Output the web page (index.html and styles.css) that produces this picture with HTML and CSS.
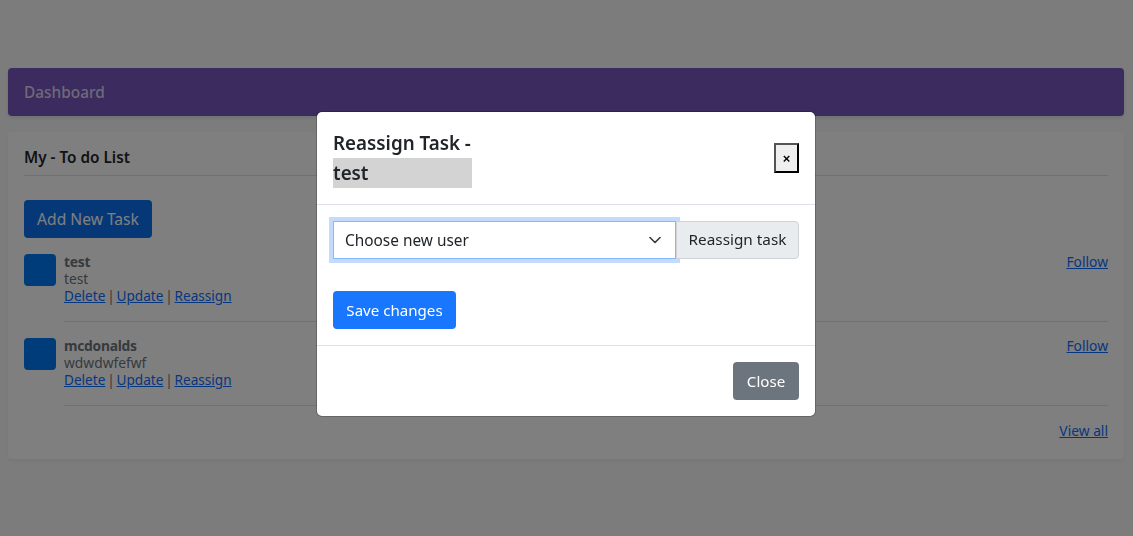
FILE: index.html
```html
<!DOCTYPE html>
<html lang="en">
<head>
  <meta charset="UTF-8" />
  <meta name="viewport" content="width=device-width, initial-scale=1.0" />
  <title>Dashboard</title>
  <link rel="stylesheet" href="styles.css">
</head>
<body>
  <nav class="navbar">Dashboard</nav>

  <main class="card">
    <h6 class="card-title">My - To do List</h6>
    <button class="btn btn-primary btn-add">Add New Task</button>

    <div class="task">
      <div class="avatar"></div>
      <div class="task-body">
        <div class="task-text">
          <strong>test</strong>
          <span>test</span>
          <span class="task-links"><a href="#">Delete</a> | <a href="#">Update</a> | <a href="#">Reassign</a></span>
        </div>
        <a href="#">Follow</a>
      </div>
    </div>

    <div class="task">
      <div class="avatar"></div>
      <div class="task-body">
        <div class="task-text">
          <strong>mcdonalds</strong>
          <span>wdwdwfefwf</span>
          <span class="task-links"><a href="#">Delete</a> | <a href="#">Update</a> | <a href="#">Reassign</a></span>
        </div>
        <a href="#">Follow</a>
      </div>
    </div>

    <div class="view-all"><a href="#">View all</a></div>
  </main>

  <div class="backdrop"></div>

  <div class="modal">
    <div class="modal-header">
      <h5 class="modal-title">Reassign Task - <span class="task-name">test</span></h5>
      <button class="close-x">×</button>
    </div>
    <div class="modal-body">
      <div class="input-group">
        <div class="select">
          <span>Choose new user</span>
          <svg width="12" height="8" viewBox="0 0 12 8"><path d="M1 1.5l5 5 5-5" fill="none" stroke="#343a40" stroke-width="1.6" stroke-linecap="round" stroke-linejoin="round"/></svg>
        </div>
        <button class="btn-addon">Reassign task</button>
      </div>
      <button class="btn btn-primary btn-save">Save changes</button>
    </div>
    <div class="modal-footer">
      <button class="btn btn-secondary">Close</button>
    </div>
  </div>
</body>
</html>
```

FILE: styles.css
```css
* {
  box-sizing: border-box;
}
body {
  margin: 0;
  padding: 68px 9px 0 8px;
  height: 536px;
  overflow: hidden;
  font-family: "Noto Sans", sans-serif;
  font-size: 13.8px;
  line-height: 17px;
  background: #f8f9fa;
  color: #6c757d;
}
a {
  color: #0d6efd;
}
.navbar {
  height: 48px;
  padding: 0 16px;
  display: flex;
  align-items: center;
  background: #7656be;
  color: rgba(255, 255, 255, 0.75);
  font-size: 15.4px;
  font-weight: 500;
  border-radius: 4px;
  box-shadow: 0 2px 4px rgba(0, 0, 0, 0.1);
}
.card {
  height: 327px;
  margin-top: 16px;
  padding: 16px;
  background: #fff;
  border-radius: 4px;
  box-shadow: 0 2px 4px rgba(0, 0, 0, 0.05);
}
.card-title {
  margin: 0 0 24px;
  height: 28px;
  font-size: 15.3px;
  line-height: 19px;
  font-weight: 600;
  color: #212529;
  border-bottom: 1px solid #dee2e6;
}
.btn {
  height: 38px;
  padding: 0 13px;
  border: 0;
  border-radius: 4px;
  font-family: inherit;
  font-size: 15.1px;
  color: #fff;
}
.btn-primary {
  background: #1976ff;
}
.btn-secondary {
  background: #6c757d;
}
.btn-add {
  width: 128px;
  display: block;
  margin-bottom: 16px;
  padding: 0 0 1px;
  font-size: 15.6px;
  background: #0c70f0;
}
.task {
  display: flex;
  gap: 8px;
  margin-bottom: 16px;
}
.avatar {
  width: 32px;
  height: 32px;
  flex: none;
  background: #0076f5;
  border-radius: 4px;
}
.task-body {
  flex: 1;
  height: 69px;
  margin-top: -1px;
  display: flex;
  justify-content: space-between;
  border-bottom: 1px solid #dee2e6;
}
.task-text {
  display: flex;
  flex-direction: column;
}
.task-text strong {
  font-weight: 700;
  letter-spacing: -0.25px;
}
.task-links {
  font-size: 13.6px;
  word-spacing: -1.7px;
}
.view-all {
  margin-top: 5px;
  text-align: right;
}
.backdrop {
  position: fixed;
  inset: 0;
  background: rgba(0, 0, 0, 0.5);
}
.modal {
  position: fixed;
  left: 317px;
  top: 112px;
  width: 498px;
  height: 304px;
  background: #fff;
  border-radius: 5px;
  box-shadow: 0 0 0 1px rgba(0, 0, 0, 0.2);
  color: #212529;
}
.modal-header {
  height: 93px;
  padding: 16px;
  display: flex;
  align-items: center;
  justify-content: space-between;
  border-bottom: 1px solid #dee2e6;
}
.modal-title {
  margin: 0;
  width: 139px;
  font-size: 18.8px;
  line-height: 30px;
  font-weight: 600;
  white-space: nowrap;
}
.task-name {
  display: block;
  background: #d3d3d3;
}
.close-x {
  width: 25px;
  height: 30px;
  padding: 0;
  background: #efefef;
  border: 2px outset #000;
  font-size: 13px;
  font-weight: 700;
  color: #000;
}
.modal-body {
  padding: 16px 16px 16px;
  height: 140px;
}
.input-group {
  display: flex;
  margin-bottom: 32px;
}
.select {
  width: 343px;
  height: 38px;
  padding: 0 14px 0 11px;
  display: flex;
  align-items: center;
  justify-content: space-between;
  background: #fff;
  border: 1px solid #86b7fe;
  box-shadow: 0 0 0 4px rgba(13, 110, 253, 0.25);
  font-size: 15.4px;
}
.btn-addon {
  flex: 1;
  height: 38px;
  padding: 0 0 2px;
  background: #e9ecef;
  border: 1px solid #ced4da;
  border-radius: 0 4px 4px 0;
  font-family: inherit;
  font-size: 15.3px;
  color: #212529;
}
.btn-save {
  width: 123px;
  padding: 0 0 1px;
}
.modal-footer {
  height: 71px;
  padding: 16px;
  display: flex;
  justify-content: flex-end;
  border-top: 1px solid #dee2e6;
}
.modal-footer .btn {
  width: 66px;
  padding: 0 0 1px;
}
```
